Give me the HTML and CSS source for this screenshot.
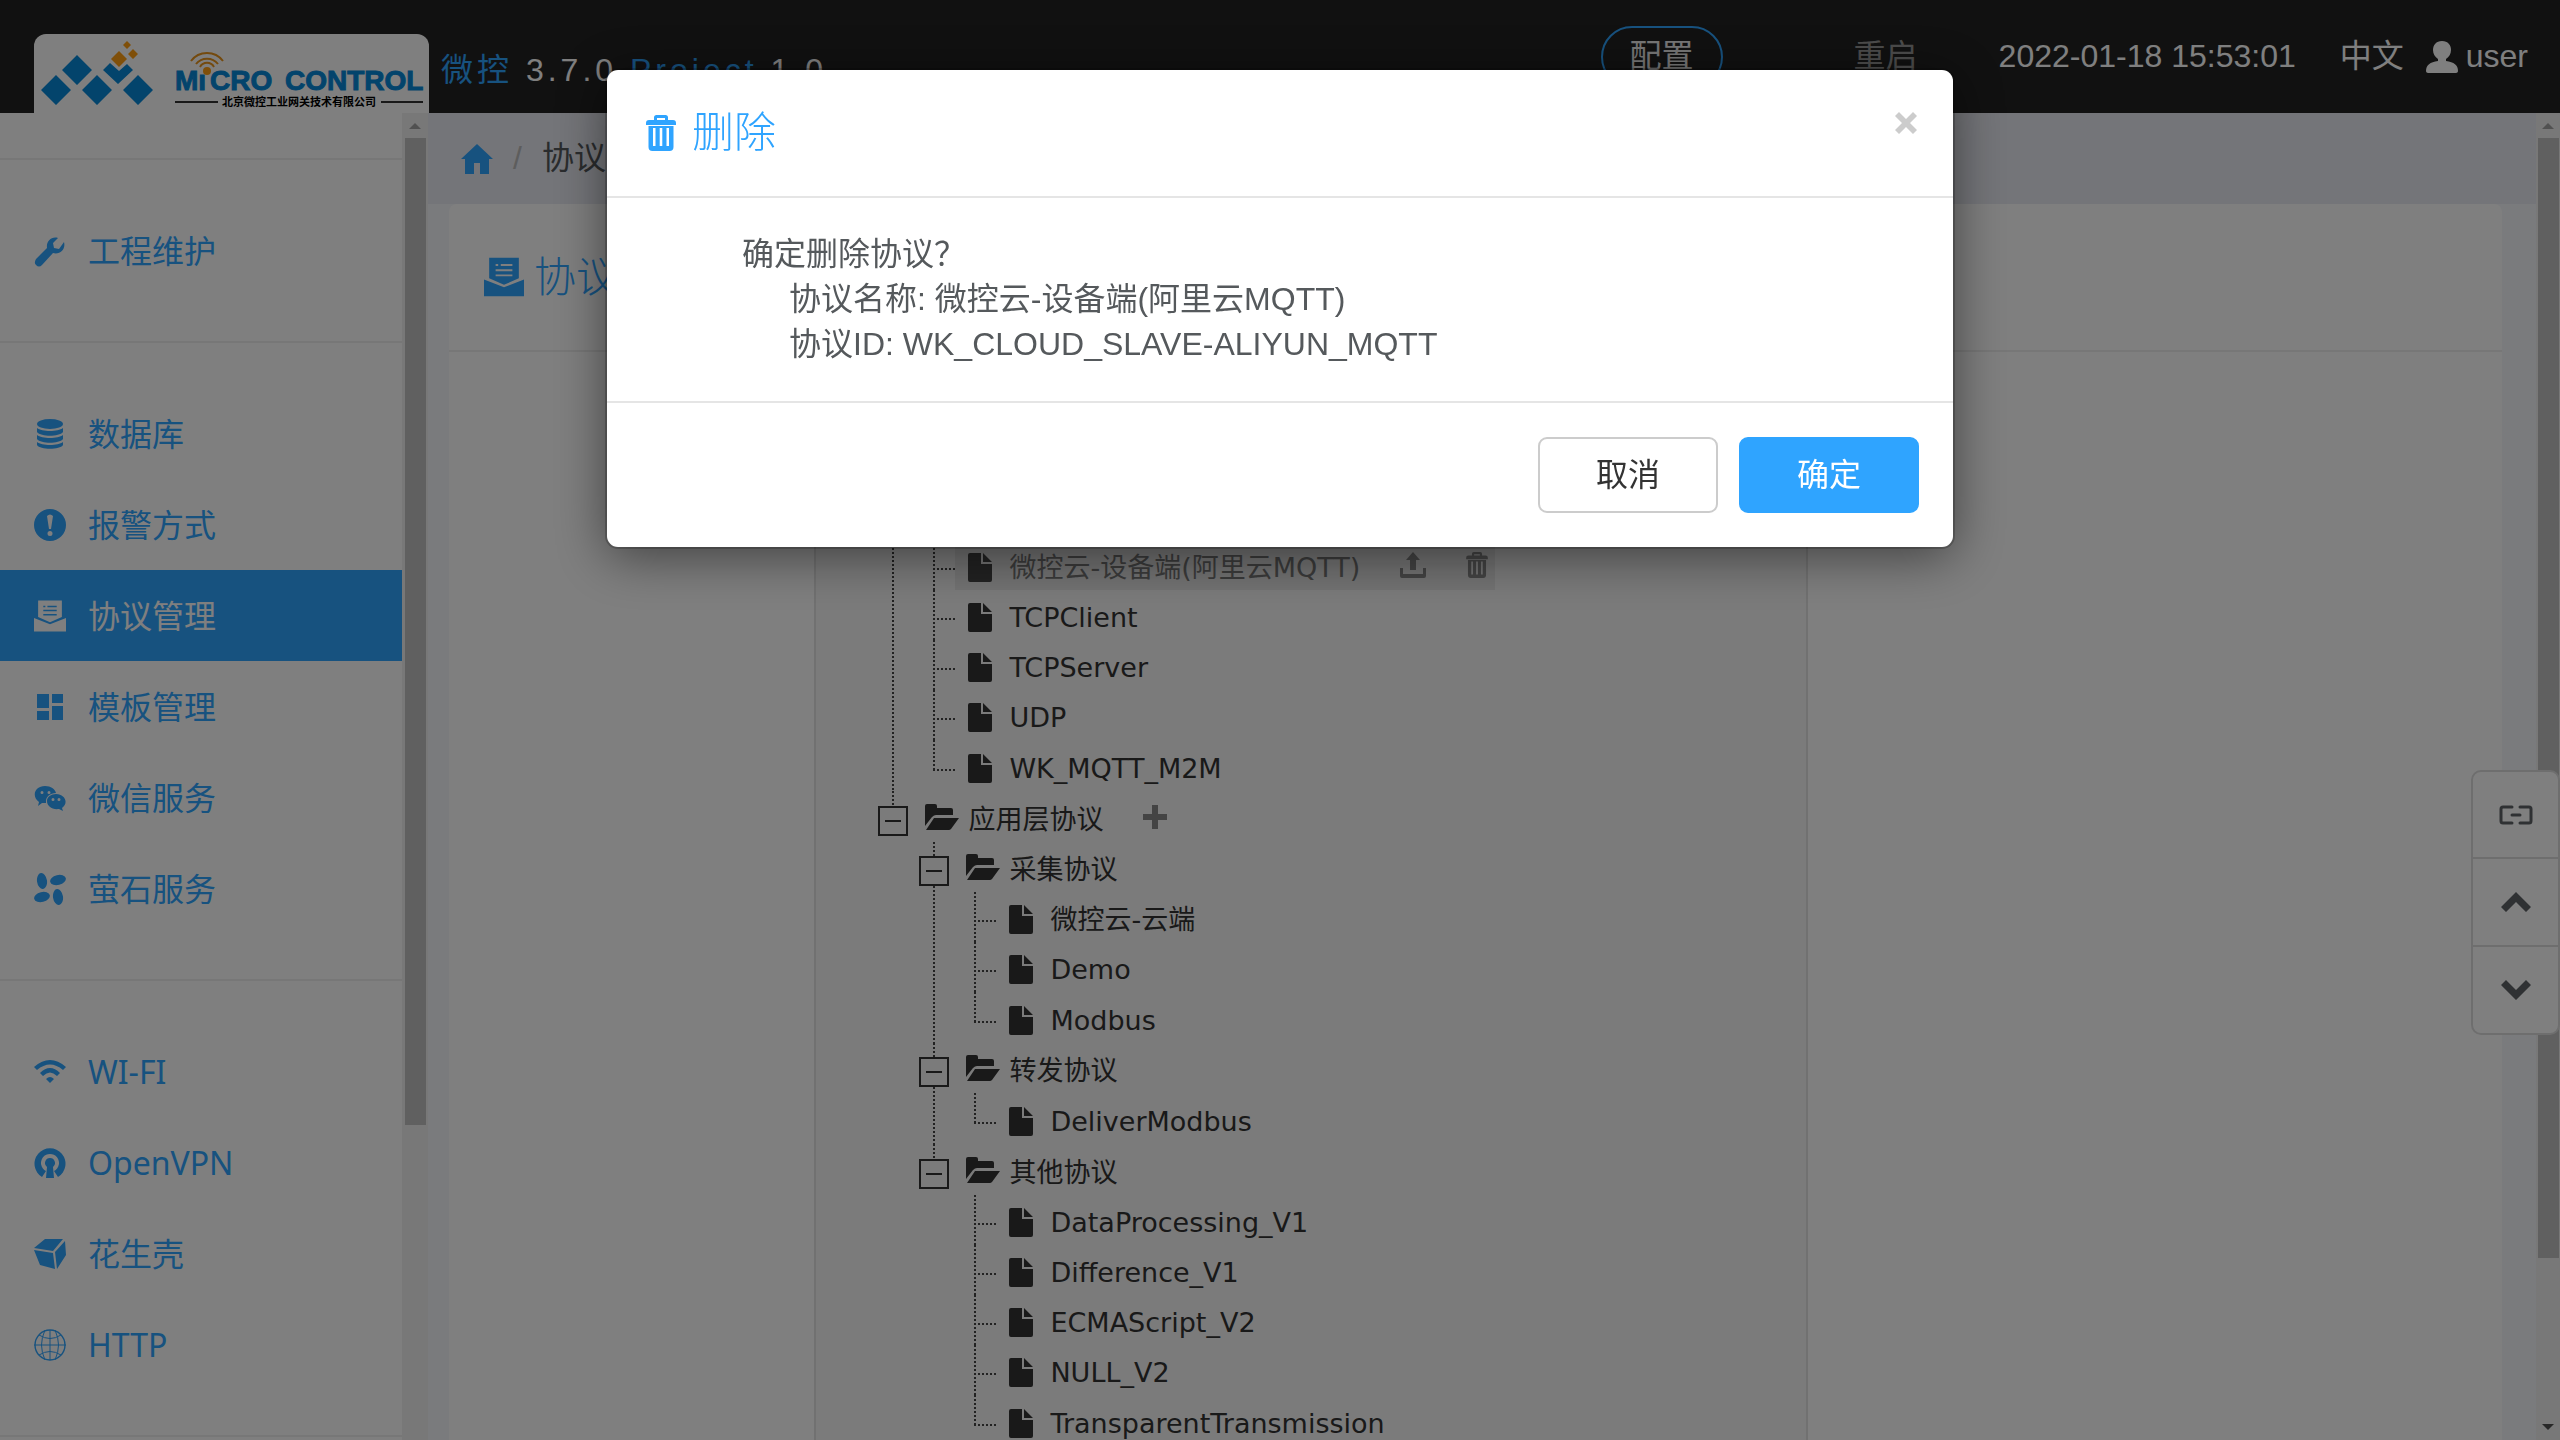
FILE: index.html
```
<!DOCTYPE html>
<html lang="zh-CN">
<head>
  <meta charset="UTF-8" />
  <meta name="viewport" content="width=device-width, initial-scale=1.0"/>
  <title>协议管理</title>
  <link rel="stylesheet" href="styles.css">
</head>
<body>
  <!-- Shared icons -->
  <svg class="sprite" aria-hidden="true">
    <symbol id="i-trash" viewBox="0 0 30 36">
      <path fill-rule="evenodd" d="M8 5V2.500Q8 0 10.500 0h9Q22 0 22 2.500V5h5q3 0 3 3v2H0V8q0-3 3-3zM11 5h8V3h-8zM2.500 11h25v21q0 4-4 4h-17q-4 0-4-4zM7 13v18h2.500V13zM13.700 13v18h2.600V13zM20.500 13v18H23V13z"/>
    </symbol>
    <symbol id="i-file" viewBox="0 0 24 29">
      <path d="M2 0h11v11h11v16q0 2-2 2H2q-2 0-2-2V2q0-2 2-2zM15 0l9 9h-9z"/>
    </symbol>
    <symbol id="i-folder" viewBox="0 0 34 26">
      <path d="M0 22V2q0-2 2-2h8q2 0 2 2v2h14q2 0 2 2v5H11q-2 0-4 2zM9 14h25l-8 11q-1 1-2 1H1z"/>
    </symbol>
    <symbol id="i-minus" viewBox="0 0 30 30">
      <path fill="none" stroke="#333" stroke-width="2" d="M1 1h28v28H1zM7 15h16"/>
    </symbol>
    <symbol id="i-doc" viewBox="0 0 31 30">
      <path fill-rule="evenodd" d="M4 0h23v16l-11.500 5L4 16zM9 5v1.500h2V5zM13 5v1.500h9V5zM9 9v1.500h13V9zM9 13v1.500h13V13zM0 17l15.500 6L31 17v13H0z"/>
    </symbol>
  </svg>

  <header class="topbar">
    <a class="logo" href="#" aria-label="Micro Control">
      <svg viewBox="0 0 395 79">
        <path fill="#0688d8" d="M22 41l15 15-15 15L7 56zM43 21l15 15-15 15-15-15zM63 41l15 15-15 15-15-15zM104 41l15 15-15 15-15-15zM76 29l9 8 8-7 6 6-15 14-15-14z"/>
        <path fill="#ff9f12" d="M85 17l8 8-8 8-8-8zM93 7l4 4-4 4-4-4zM99 15l5 5-5 5-5-5z"/>
        <g class="line" stroke="#e8941c" stroke-width="2">
          <path d="M157 27a20 20 0 0 1 32 0M162 30a14 14 0 0 1 22 0M166 33a8 8 0 0 1 14 0"/>
        </g>
        <text class="logo-name" x="141" y="56">Mı</text>
        <text class="logo-name" x="176" y="56">CRO</text>
        <text class="logo-name" x="251" y="56">CONTROL</text>
        <circle cx="173" cy="37" r="4" fill="#ff9f12"/>
        <path stroke="#333" stroke-width="2" d="M141 68h43M347 68h42"/>
        <text class="logo-sub" x="188" y="72">北京微控工业网关技术有限公司</text>
      </svg>
    </a>
    <div class="version"><b>微控</b> 3.7.0 <b>Project</b> 1.0</div>
    <nav class="top-tools">
      <button class="top-btn outlined">配置</button>
      <button class="top-btn">重启</button>
      <time class="clock">2022-01-18 15:53:01</time>
      <a class="lang" href="#">中文</a>
      <a class="user" href="#">
        <svg width="32" height="32" viewBox="0 0 32 32"><path d="M16 0c6 0 9 4 9 9 0 4-2 7-5 9v2c8 1 12 4 12 10 0 1-1 2-2 2H2c-1 0-2-1-2-2 0-6 4-9 12-10v-2c-3-2-5-5-5-9 0-5 3-9 9-9z"/></svg>
        user
      </a>
    </nav>
  </header>

  <div class="page">
    <aside class="sidebar">
      <nav class="menu">
        <div class="menu-head"></div>
        <div class="menu-group">
          <a href="#"><svg viewBox="0 0 32 32"><path d="M30 7c2 7-4 13-11 11L8 30c-2 2-4 2-6 0s-1-4 0-6l11-11C12 7 17 1 24 3l-5 5 1 5 5 1z"/></svg>工程维护</a>
        </div>
        <div class="menu-group">
          <a href="#"><svg viewBox="0 0 32 32"><ellipse cx="16" cy="6" rx="13" ry="5"/><path d="M3 10c5 4 21 4 26 0v4c-4 5-22 5-26 0zM3 17c5 4 21 4 26 0v4c-4 5-22 5-26 0zM3 24c5 4 21 4 26 0v3c-3 5-23 5-26 0z"/></svg>数据库</a>
          <a href="#"><svg viewBox="0 0 32 32"><path fill-rule="evenodd" d="M16 0a16 16 0 1 1 0 32a16 16 0 0 1 0-32zM13 7l2 13h2l2-13q-3-3-6 0zM16 22a2.500 2.500 0 1 0 0 5a2.500 2.500 0 0 0 0-5z"/></svg>报警方式</a>
          <a href="#" class="active"><svg><use href="#i-doc"/></svg>协议管理</a>
          <a href="#"><svg viewBox="0 0 32 32"><path d="M3 3h12v14H3zM18 3h11v9H18zM18 15h11v14H18zM3 20h12v9H3z"/></svg>模板管理</a>
          <a href="#"><svg viewBox="0 0 32 32"><path fill-rule="evenodd" d="M11 4c6 0 10 3 11 7-6 0-10 4-10 8v2H8l-4 3 1-4C-3 14 1 4 11 4zM8 9a1.500 1.500 0 1 0 0 3a1.500 1.500 0 0 0 0-3zM15 9a1.500 1.500 0 1 0 0 3a1.500 1.500 0 0 0 0-3zM22 12c9 0 13 9 6 14l1 3-4-2c-7 1-12-3-12-8 0-4 4-7 9-7zM19 16a1.500 1.500 0 1 0 0 3a1.500 1.500 0 0 0 0-3zM25 16a1.500 1.500 0 1 0 0 3a1.500 1.500 0 0 0 0-3z"/></svg>微信服务</a>
          <a href="#"><svg viewBox="0 0 32 32"><ellipse cx="8" cy="8" rx="5" ry="8" transform="rotate(-8 8 8)"/><ellipse cx="24" cy="7" rx="8" ry="5" transform="rotate(-14 24 7)"/><ellipse cx="8" cy="24" rx="8" ry="5" transform="rotate(-14 8 24)"/><ellipse cx="24" cy="24" rx="5" ry="8" transform="rotate(-8 24 24)"/></svg>萤石服务</a>
        </div>
        <div class="menu-group">
          <a href="#"><svg viewBox="0 0 32 32"><path d="M0 11Q16-3 32 11l-3 3Q16 3 3 14zM6 17q10-10 20 0l-3 3q-7-7-14 0zM12 23q4-4 8 0l-4 4z"/></svg>WI-FI</a>
          <a href="#"><svg viewBox="0 0 32 32"><path d="M8 30A15.500 15.500 0 1 1 24 30l-4-6a9 9 0 1 0-8 0zM16 11a5 5 0 0 1 3 9l1 11h-8l1-11a5 5 0 0 1 3-9z"/></svg>OpenVPN</a>
          <a href="#"><svg viewBox="0 0 32 32"><path d="M11 1h18L19 13 0 10zM0 12l19 3 2 16-15-4zM31 3l1 14-9 14-2-17z"/></svg>花生壳</a>
          <a href="#"><svg class="line" viewBox="0 0 32 32" stroke="currentColor"><circle cx="16" cy="16" r="15" stroke-width="1.400"/><path d="M0 16h32M16 1v30M5 6q11 7 22 0M5 26q11-7 22 0M11 1Q4 16 11 31M21 1q7 15 0 30"/></svg>HTTP</a>
        </div>
        <div class="menu-group"></div>
      </nav>
      <div class="scrollbar short"><i class="arrow up"></i><i class="thumb"></i></div>
    </aside>

    <main class="content">
      <div class="content-body">
        <nav class="breadcrumb">
          <a href="#" aria-label="首页"><svg width="32" height="30" viewBox="0 0 32 30"><path d="M16 0l16 15h-4v15h-9V19h-6v11H4V15H0z"/></svg></a>
          <span class="sep">/</span>
          <span>协议管理</span>
        </nav>
        <section class="panel">
          <h2 class="panel-head"><svg width="40" height="40"><use href="#i-doc"/></svg>协议管理</h2>
          <div class="panel-body">
            <div class="tree-box">
              <ul class="tree">
                <li>
                  <ul>
                    <li class="file"><div class="node selected"><svg class="f"><use href="#i-file"/></svg><span>微控云-设备端(阿里云MQTT)</span>
                      <button aria-label="导出"><svg width="26" height="26" viewBox="0 0 26 26"><path d="M13 0l7 8h-4v10h-6V8H6zM0 16h3v6h20v-6h3v8q0 2-2 2H2q-2 0-2-2z"/></svg></button>
                      <button aria-label="删除"><svg width="22" height="26"><use href="#i-trash"/></svg></button></div></li>
                    <li class="file"><div class="node"><svg class="f"><use href="#i-file"/></svg><span>TCPClient</span></div></li>
                    <li class="file"><div class="node"><svg class="f"><use href="#i-file"/></svg><span>TCPServer</span></div></li>
                    <li class="file"><div class="node"><svg class="f"><use href="#i-file"/></svg><span>UDP</span></div></li>
                    <li class="file"><div class="node"><svg class="f"><use href="#i-file"/></svg><span>WK_MQTT_M2M</span></div></li>
                  </ul>
                </li>
                <li>
                  <div class="folder"><svg class="switch"><use href="#i-minus"/></svg><div class="node"><svg class="d"><use href="#i-folder"/></svg><span>应用层协议</span>
                    <button aria-label="添加"><svg width="24" height="24" viewBox="0 0 24 24"><path d="M9 0h6v9h9v6h-9v9H9v-9H0V9h9z"/></svg></button></div></div>
                  <ul>
                    <li>
                      <div class="folder"><svg class="switch"><use href="#i-minus"/></svg><div class="node"><svg class="d"><use href="#i-folder"/></svg><span>采集协议</span></div></div>
                      <ul>
                        <li class="file"><div class="node"><svg class="f"><use href="#i-file"/></svg><span>微控云-云端</span></div></li>
                        <li class="file"><div class="node"><svg class="f"><use href="#i-file"/></svg><span>Demo</span></div></li>
                        <li class="file"><div class="node"><svg class="f"><use href="#i-file"/></svg><span>Modbus</span></div></li>
                      </ul>
                    </li>
                    <li>
                      <div class="folder"><svg class="switch"><use href="#i-minus"/></svg><div class="node"><svg class="d"><use href="#i-folder"/></svg><span>转发协议</span></div></div>
                      <ul>
                        <li class="file"><div class="node"><svg class="f"><use href="#i-file"/></svg><span>DeliverModbus</span></div></li>
                      </ul>
                    </li>
                    <li>
                      <div class="folder"><svg class="switch"><use href="#i-minus"/></svg><div class="node"><svg class="d"><use href="#i-folder"/></svg><span>其他协议</span></div></div>
                      <ul>
                        <li class="file"><div class="node"><svg class="f"><use href="#i-file"/></svg><span>DataProcessing_V1</span></div></li>
                        <li class="file"><div class="node"><svg class="f"><use href="#i-file"/></svg><span>Difference_V1</span></div></li>
                        <li class="file"><div class="node"><svg class="f"><use href="#i-file"/></svg><span>ECMAScript_V2</span></div></li>
                        <li class="file"><div class="node"><svg class="f"><use href="#i-file"/></svg><span>NULL_V2</span></div></li>
                        <li class="file"><div class="node"><svg class="f"><use href="#i-file"/></svg><span>TransparentTransmission</span></div></li>
                      </ul>
                    </li>
                  </ul>
                </li>
              </ul>
            </div>
          </div>
        </section>
      </div>
      <div class="scrollbar"><i class="arrow up"></i><i class="thumb"></i><i class="arrow down"></i></div>
    </main>
  </div>

  <!-- Quick scroll buttons -->
  <div class="side-tools">
    <button aria-label="展开"><svg class="line" width="34" height="20" viewBox="0 0 34 20"><path d="M13 2H4Q2 2 2 4v12q0 2 2 2h9M21 2h9q2 0 2 2v12q0 2-2 2h-9M13 10h8" stroke="currentColor" stroke-width="3" stroke-linecap="round"/></svg></button>
    <button aria-label="顶部"><svg width="30" height="20" viewBox="0 0 30 20"><path d="M15 0l15 15-5 5-10-10L5 20l-5-5z"/></svg></button>
    <button aria-label="底部"><svg width="30" height="20" viewBox="0 0 30 20"><path d="M15 20L0 5l5-5 10 10L25 0l5 5z"/></svg></button>
  </div>

  <!-- Delete dialog -->
  <div class="overlay">
    <div class="modal" role="dialog" aria-labelledby="modalTitle">
      <div class="modal-header">
        <h3 id="modalTitle"><svg width="30" height="36"><use href="#i-trash"/></svg>删除</h3>
        <button class="close" aria-label="关闭"><svg width="22" height="22" viewBox="0 0 22 22"><path d="M4 0l7 7 7-7 4 4-7 7 7 7-4 4-7-7-7 7-4-4 7-7-7-7z"/></svg></button>
      </div>
      <div class="modal-body">
        <p>确定删除协议？</p>
        <p class="indent">协议名称: 微控云-设备端(阿里云MQTT)</p>
        <p class="indent">协议ID: WK_CLOUD_SLAVE-ALIYUN_MQTT</p>
      </div>
      <div class="modal-footer">
        <button class="btn">取消</button>
        <button class="btn primary">确定</button>
      </div>
    </div>
  </div>
</body>
</html>
```
FILE: styles.css
```
* {
  box-sizing: border-box;
}

body {
  margin: 0;
  height: 100vh;
  display: flex;
  flex-direction: column;
  overflow: hidden;
  font-family: "Liberation Sans", "Noto Sans CJK SC", sans-serif;
  font-size: 32px;
  line-height: 45px;
  color: #55595c;
  background: #f4f6fa;
}

a {
  color: inherit;
  text-decoration: none;
}

button {
  padding: 0;
  border: none;
  background: none;
  font: inherit;
  color: inherit;
  cursor: pointer;
}

svg {
  display: block;
  flex: none;
  fill: currentColor;
}

.line {
  fill: none;
}

.sprite {
  display: none;
}

/* top bar */
.topbar {
  flex: none;
  height: 113px;
  display: flex;
  align-items: center;
  padding: 0 32px 0 34px;
  background: #222;
  color: #fff;
}

.logo {
  align-self: flex-end;
  width: 395px;
  height: 79px;
  background: #fff;
  border-radius: 12px 12px 0 0;
}

.logo-name {
  font-size: 28px;
  font-weight: bold;
  fill: #0688d8;
  stroke: #0688d8;
}

.logo-sub {
  font-size: 11px;
  font-weight: bold;
  fill: #000;
}

.version {
  margin: 28px 0 0 12px;
  letter-spacing: 4px;
}

.version b {
  font-weight: normal;
  color: #2fa4ff;
}

.top-tools {
  display: flex;
  align-items: center;
  margin-left: auto;
}

.top-btn {
  width: 122px;
  height: 62px;
  margin-right: 52px;
  color: #999;
}

.top-btn.outlined {
  margin-right: 102px;
  border: 2px solid #2fa4ff;
  border-radius: 31px;
  color: #eee;
}

.lang {
  margin: 0 22px 0 44px;
}

.user {
  display: flex;
  align-items: center;
  gap: 8px;
}

/* page */
.page {
  flex: 1;
  min-height: 0;
  display: flex;
}

.sidebar {
  width: 428px;
  flex: none;
  display: flex;
  overflow: hidden;
  background: #fff;
}

.menu {
  flex: 1;
  font-family: "Noto Sans", "Noto Sans CJK SC", sans-serif;
  color: #2fa4ff;
}

.menu-head {
  height: 45px;
}

.menu-group {
  padding: 45px 0;
  border-top: 2px solid #eee;
}

.menu a {
  height: 91px;
  display: flex;
  align-items: center;
  gap: 22px;
  padding-left: 34px;
}

.menu a.active {
  background: #2fa4ff;
  color: #fff;
}

.menu svg {
  width: 32px;
  height: 32px;
}

.scrollbar {
  flex: none;
  width: 24px;
  display: flex;
  flex-direction: column;
  align-items: center;
  background: #f1f1f1;
}

.sidebar .scrollbar {
  width: 26px;
}

.thumb {
  width: 21px;
  height: 84.4%;
  background: #c1c1c1;
}

.short .thumb {
  height: 74.4%;
}

.arrow {
  border: 6px solid transparent;
}

.arrow.up {
  margin: 4px 0 9px;
  border-bottom-color: #a3a3a3;
}

.arrow.down {
  margin-top: auto;
  margin-bottom: 4px;
  border-top-color: #505050;
}

.content {
  flex: 1;
  display: flex;
  min-width: 0;
}

.content-body {
  flex: 1;
  display: flex;
  flex-direction: column;
}

.breadcrumb {
  flex: none;
  height: 91px;
  display: flex;
  align-items: center;
  gap: 20px;
  padding-left: 33px;
  background: #e9ebf3;
}

.breadcrumb a {
  color: #2fa4ff;
}

.breadcrumb .sep {
  color: #bbb;
}

.panel {
  flex: 1;
  margin: 0 34px 0 21px;
  background: #fff;
  border-radius: 8px 8px 0 0;
}

.panel-head {
  display: flex;
  align-items: center;
  gap: 10px;
  height: 148px;
  margin: 0;
  padding-left: 35px;
  border-bottom: 2px solid #eee;
  font-size: 42px;
  font-weight: 300;
  color: #2fa4ff;
}

.panel-body {
  padding-top: 34px;
}

/* protocol tree */
.tree-box {
  width: 48.4%;
  margin-left: 17.8%;
  padding: 152px 0 0 55px;
  border: 2px solid #e3e3e3;
  background: #f7f7f7;
  font-family: "DejaVu Sans", "Noto Sans CJK SC", sans-serif;
  font-size: 27px;
  color: #333;
}

.tree,
.tree ul {
  margin: 0;
  padding: 0;
  list-style: none;
}

.tree ul {
  padding-left: 41px;
}

/* dotted guide lines */
.tree li {
  background: repeating-linear-gradient(#444 0 2px, transparent 2px 4px) 21px 0 / 2px 100% no-repeat;
}

.tree li:last-child {
  padding-top: 1px;
  background-size: 2px 30px;
}

.tree .file {
  display: flex;
  padding-left: 21px;
}

.file::before {
  content: "";
  width: 22px;
  height: 2px;
  margin-top: 28px;
  background: repeating-linear-gradient(90deg, #444 0 2px, transparent 2px 4px);
}

.folder {
  display: flex;
}

.switch {
  width: 30px;
  height: 30px;
  margin: 14px 6px 0 7px;
  background: #f7f7f7;
}

.node {
  display: flex;
  align-items: center;
  height: 50px;
  padding-right: 7px;
}

.node.selected {
  background: #e7e7e7;
  color: #777;
}

.node span {
  padding-top: 4px;
}

.node .f {
  width: 24px;
  height: 29px;
  margin: 4px 17px 0 13px;
}

.selected .f {
  color: #444;
}

.node .d {
  width: 34px;
  height: 26px;
  margin: 0 9px 0 11px;
}

.node button {
  margin-left: 40px;
  color: #888;
}

/* floating buttons */
.side-tools {
  position: fixed;
  right: 0;
  top: 770px;
  display: flex;
  flex-direction: column;
  width: 89px;
  border: 2px solid #ddd;
  border-radius: 10px;
  background: #fff;
  color: #5e6266;
}

.side-tools button {
  height: 85px;
  display: flex;
  align-items: center;
  justify-content: center;
}

.side-tools button + button {
  height: 88px;
  border-top: 2px solid #ddd;
}

/* modal */
.overlay {
  position: fixed;
  inset: 0;
  display: flex;
  justify-content: center;
  align-items: flex-start;
  padding-top: 70px;
  background: rgba(0, 0, 0, 0.5);
}

.modal {
  width: 1346px;
  max-width: 90%;
  background: #fff;
  border-radius: 11px;
  box-shadow: 0 0 0 2px rgba(0, 0, 0, 0.2), 0 9px 52px rgba(0, 0, 0, 0.5);
}

.modal-header {
  display: flex;
  justify-content: space-between;
  align-items: flex-start;
  height: 128px;
  padding: 40px 36px 0 39px;
  border-bottom: 2px solid #e5e5e5;
}

.modal-header h3 {
  display: flex;
  align-items: center;
  gap: 16px;
  margin: 0;
  font-size: 42px;
  font-weight: 300;
  color: #2fa4ff;
}

.close {
  margin-top: 2px;
  color: #ccc;
}

.modal-body {
  padding: 34px 135px;
  border-bottom: 2px solid #e5e5e5;
}

.modal-body p {
  margin: 0;
}

.modal-body .indent {
  padding-left: 47px;
}

.modal-footer {
  display: flex;
  justify-content: flex-end;
  gap: 21px;
  padding: 34px;
}

.btn {
  width: 180px;
  height: 76px;
  border: 2px solid #ccc;
  border-radius: 9px;
  background: #fff;
  color: #333;
}

.btn.primary {
  border-color: #2fa4ff;
  background: #2fa4ff;
  color: #fff;
}
```
